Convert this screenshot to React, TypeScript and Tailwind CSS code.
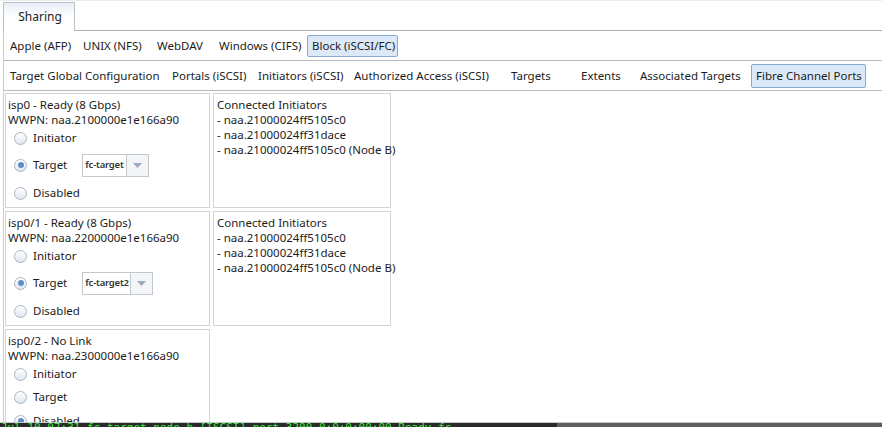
import React from "react";

const font = { fontFamily: '"Noto Sans", "Open Sans", sans-serif' };

function Radio({ checked }: { checked?: boolean }) {
    return (
        <span className="relative inline-block h-[13px] w-[13px] shrink-0 rounded-full border border-[#a9b5c2] bg-gradient-to-b from-[#ffffff] to-[#dfe7f0]">
            {checked && (
                <span className="absolute left-[2.5px] top-[2.5px] h-[6px] w-[6px] rounded-full bg-[#5d8ec6]" />
            )}
        </span>
    );
}

function Combo({ value, width }: { value: string; width: string }) {
    return (
        <div className="ml-[9px] flex h-[23px] items-stretch border border-[#c3c8ce] bg-white">
            <div className={`${width} flex items-center whitespace-nowrap pl-[2px] text-[9.5px] font-semibold tracking-[-0.2px] text-[#333]`}>{value}</div>
            <div className="flex w-[22px] items-center justify-center border-l border-[#c3c8ce] bg-[#f4f5f7]">
                <svg width="9" height="5" viewBox="0 0 9 5">
                    <path d="M0 0 L9 0 L4.5 5 Z" fill="#9aabbf" />
                </svg>
            </div>
        </div>
    );
}

interface Port {
    name: string;
    wwpn: string;
    mode: "initiator" | "target" | "disabled";
    target?: string;
    comboWidth?: string;
    initiators?: string[];
}

const ports: Port[] = [
    {
        name: "isp0 - Ready (8 Gbps)",
        wwpn: "WWPN: naa.2100000e1e166a90",
        mode: "target",
        target: "fc-target",
        comboWidth: "w-[43px]",
        initiators: ["- naa.21000024ff5105c0", "- naa.21000024ff31dace", "- naa.21000024ff5105c0 (Node B)"],
    },
    {
        name: "isp0/1 - Ready (8 Gbps)",
        wwpn: "WWPN: naa.2200000e1e166a90",
        mode: "target",
        target: "fc-target2",
        comboWidth: "w-[47px]",
        initiators: ["- naa.21000024ff5105c0", "- naa.21000024ff31dace", "- naa.21000024ff5105c0 (Node B)"],
    },
    {
        name: "isp0/2 - No Link",
        wwpn: "WWPN: naa.2300000e1e166a90",
        mode: "disabled",
    },
];

function PortCard({ port }: { port: Port }) {
    return (
        <div className="flex shrink-0 gap-[3px]">
            <div className="w-[205px] shrink-0 whitespace-nowrap border border-[#d4d4d4] pb-[2px] pl-[2px] pt-[3px]">
                <div className="leading-[15px]">{port.name}</div>
                <div className="leading-[15px]">{port.wwpn}</div>
                <div className="flex h-[22px] items-center gap-[6px] pl-[6px]">
                    <Radio checked={port.mode === "initiator"} />
                    <span>Initiator</span>
                </div>
                <div className={`flex ${port.target ? "h-[32px]" : "h-[24px]"} items-center gap-[6px] pl-[6px]`}>
                    <Radio checked={port.mode === "target"} />
                    <span>Target</span>
                    {port.target && <Combo value={port.target} width={port.comboWidth || "w-[43px]"} />}
                </div>
                <div className="flex h-[24px] items-center gap-[6px] pl-[6px]">
                    <Radio checked={port.mode === "disabled"} />
                    <span>Disabled</span>
                </div>
            </div>
            {port.initiators && (
                <div className="w-[178px] shrink-0 whitespace-nowrap border border-[#d4d4d4] pl-[3px] pt-[3px]">
                    <div className="leading-[15px]">Connected Initiators</div>
                    {port.initiators.map((i) => (
                        <div key={i} className="leading-[15px]">{i}</div>
                    ))}
                </div>
            )}
        </div>
    );
}

const shareTabs = [
    { label: "Apple (AFP)", w: "w-[73px]", pl: "pl-[6px]" },
    { label: "UNIX (NFS)", w: "w-[74px]", pl: "pl-[6px]" },
    { label: "WebDAV", w: "w-[62px]", pl: "pl-[6px]" },
    { label: "Windows (CIFS)", w: "w-[94px]", pl: "pl-[6px]" },
];

const blockTabs = [
    { label: "Target Global Configuration", w: "w-[163px]", pl: "pl-[6px]" },
    { label: "Portals (iSCSI)", w: "w-[86px]", pl: "pl-[5px]" },
    { label: "Initiators (iSCSI)", w: "w-[96px]", pl: "pl-[5px]" },
    { label: "Authorized Access (iSCSI)", w: "w-[156px]", pl: "pl-[5px]" },
    { label: "Targets", w: "w-[70px]", pl: "pl-[6px]" },
    { label: "Extents", w: "w-[59px]", pl: "pl-[6px]" },
    { label: "Associated Targets", w: "w-[117px]", pl: "pl-[6px]" },
];

export default function App() {
    return (
        <div className="flex h-[427px] w-[882px] flex-col overflow-hidden bg-white text-[11.5px] text-[#1c1c1c]" style={font}>
            {/* top tab strip */}
            <div className="flex h-[31px] shrink-0 border-t border-[#ececec] pt-[1px]">
                <div className="ml-[3px] flex w-[72px] items-center justify-center border-l border-r border-t border-[#b9c0c9] bg-gradient-to-b from-[#e8eff8] via-white to-white pl-[2px] text-[12px]">
                    Sharing
                </div>
                <div className="flex-1 border-b border-[#a9b1bb]" />
            </div>

            <div className="ml-[3px] flex min-h-0 flex-1 flex-col border-l border-[#c8ccd2]">
                {/* share type row */}
                <div className="flex h-[30px] shrink-0 items-center border-b border-[#b3bac4]">
                    {shareTabs.map((t) => (
                        <div key={t.label} className={`${t.w} ${t.pl} shrink-0 whitespace-nowrap`}>
                            {t.label}
                        </div>
                    ))}
                    <div className="flex h-[22px] w-[91px] shrink-0 items-center whitespace-nowrap rounded-[2px] border border-[#89a9cf] bg-[#dbe9f8] pl-[4px]">
                        Block (iSCSI/FC)
                    </div>
                </div>

                {/* block sub-tabs */}
                <div className="flex h-[30px] shrink-0 items-center border-b border-[#b3bac4]">
                    {blockTabs.map((t) => (
                        <div key={t.label} className={`${t.w} ${t.pl} shrink-0 whitespace-nowrap`}>
                            {t.label}
                        </div>
                    ))}
                    <div className="flex h-[24px] w-[115px] shrink-0 items-center whitespace-nowrap rounded-[2px] border border-[#89a9cf] bg-[#dbe9f8] pl-[4px]">
                        Fibre Channel Ports
                    </div>
                </div>

                {/* ports */}
                <div className="flex min-h-0 flex-1 flex-col gap-[3px] overflow-hidden pl-[1px] pt-[2px]">
                    {ports.map((p) => (
                        <PortCard key={p.name} port={p} />
                    ))}
                </div>
            </div>

            {/* terminal strip behind */}
            <div className="flex h-[5px] shrink-0 flex-col overflow-hidden">
                <div className="h-[1px] bg-[#c4c8cc]" />
                <div className="flex h-[4px]">
                    <div className="w-[557px] overflow-hidden bg-[#2a2a2a] text-[11px] leading-[11px] text-[#3ee83e]" style={{ fontFamily: '"DejaVu Sans Mono", monospace' }}>
                        <div className="-mt-[1px] whitespace-nowrap pl-[1px]">Jul 10 07:31 fc-target node-b [ISCSI] port 3200 0:0:0:00:00 Ready fc</div>
                    </div>
                    <div className="flex-1 bg-[#5e5e5e]" />
                </div>
            </div>
        </div>
    );
}
